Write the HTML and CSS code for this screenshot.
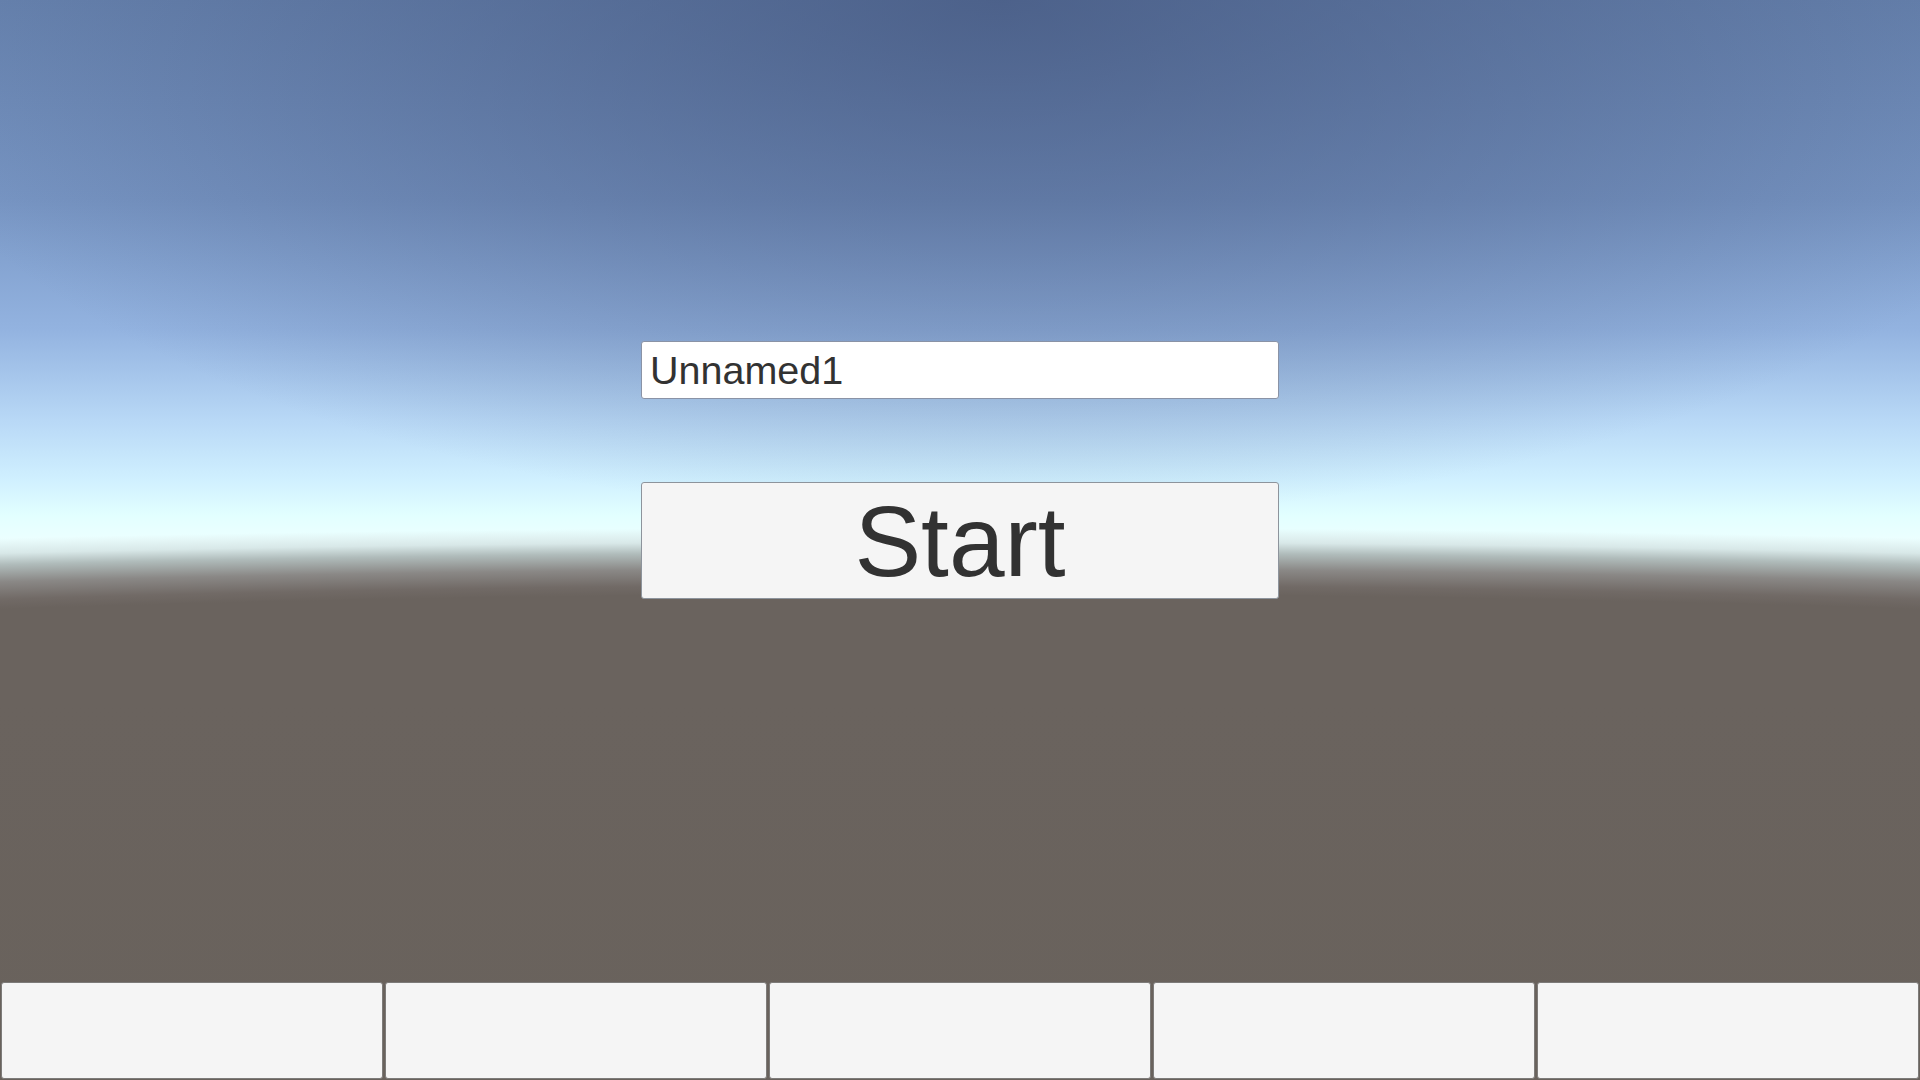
FILE: index.html
```html
<!DOCTYPE html>
<html lang="en">
<head>
<meta charset="utf-8">
<title>Start</title>
<link rel="stylesheet" href="styles.css">
</head>
<body>
<div class="screen">
  <main class="menu">
    <input class="name-field" type="text" value="Unnamed1" aria-label="Player name">
    <button class="start-btn" type="button">Start</button>
  </main>
  <nav class="tab-bar">
    <button class="tab" type="button" aria-label="Tab 1"></button>
    <button class="tab" type="button" aria-label="Tab 2"></button>
    <button class="tab" type="button" aria-label="Tab 3"></button>
    <button class="tab" type="button" aria-label="Tab 4"></button>
    <button class="tab" type="button" aria-label="Tab 5"></button>
  </nav>
</div>
</body>
</html>
```
FILE: styles.css
```css
html, body {
  margin: 0;
  padding: 0;
  width: 100%;
  height: 100%;
  overflow: hidden;
}

body {
  font-family: "Liberation Sans", Arial, sans-serif;
  background-color: #6a635e;
  background-image:
    radial-gradient(ellipse 1150px 520px at 52% 0, rgba(66, 84, 124, 0.72), rgba(66, 84, 124, 0) 100%),
    radial-gradient(ellipse 2400px 180px at 50% 774px,
      #6a635e 0%, #6a635e 100%,
      #716a66 105%, #8a8886 114%, #b0bcbb 123%, #d8e8e8 129%, rgba(234, 255, 255, 0) 137%),
    linear-gradient(to bottom,
      #6884b0 0px, #7896c4 200px, #93b3e0 330px, #b8d8f6 420px,
      #d0f0ff 480px, #e2ffff 515px, #ecffff 540px, #ecffff 700px,
      #6a635e 700px, #69625c 1080px);
  background-size: 100% 100%, 100% 700px, 100% 100%;
  background-repeat: no-repeat;
  background-position: 0 0, 0 0, 0 0;
}

.screen {
  height: 1080px;
  display: flex;
  flex-direction: column;
}

.menu {
  flex: 1;
  display: flex;
  flex-direction: column;
  align-items: center;
  padding-top: 341px;
  gap: 83px;
}

.name-field {
  box-sizing: border-box;
  width: 638px;
  height: 58px;
  margin: 0;
  padding: 0 8px 0 8px;
  background: #ffffff;
  border: 1px solid #8a93a6;
  border-radius: 3px;
  font-family: "Liberation Sans", Arial, sans-serif;
  font-size: 39.5px;
  color: #323232;
  outline: none;
}

.start-btn {
  box-sizing: border-box;
  width: 638px;
  height: 117px;
  margin: 0;
  padding: 0;
  background: #f5f5f5;
  border: 1px solid #8d949c;
  border-radius: 3px;
  font-family: "Liberation Sans", Arial, sans-serif;
  font-size: 100px;
  line-height: 1;
  color: #323232;
  cursor: pointer;
}

.tab-bar {
  height: 98px;
  display: grid;
  grid-template-columns: repeat(5, 1fr);
}

.tab {
  box-sizing: border-box;
  margin: 0 1px 1px 1px;
  padding: 0;
  background: #f5f5f5;
  border: 1px solid #7d7b79;
  border-radius: 3px;
  cursor: pointer;
}
```
